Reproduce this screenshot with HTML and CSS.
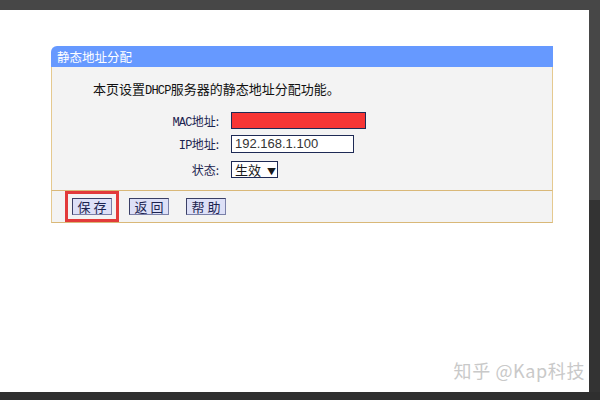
FILE: index.html
```html
<!DOCTYPE html>
<html lang="zh-CN">
<head>
  <meta charset="UTF-8" />
  <title>静态地址分配</title>
  <link rel="stylesheet" href="styles.css">
</head>
<body>
  <div class="top"></div>
  <div class="middle">
    <div class="page">
      <div class="panel">
        <div class="panel-head">静态地址分配</div>
        <div class="panel-body">
          <p class="desc">本页设置<span class="lat">DHCP</span>服务器的静态地址分配功能。</p>
          <div class="row">
            <span class="label"><span class="lat">MAC</span>地址:</span>
            <span class="field mac"></span>
          </div>
          <div class="row">
            <span class="label"><span class="lat">IP</span>地址:</span>
            <span class="field ip">192.168.1.100</span>
          </div>
          <div class="row status">
            <span class="label">状态:</span>
            <span class="field select">生效 <span class="arrow">▼</span></span>
          </div>
        </div>
        <div class="panel-foot">
          <span class="mark"><button class="btn">保存</button></span>
          <button class="btn">返回</button>
          <button class="btn">帮助</button>
        </div>
      </div>
      <div class="watermark">知乎 @Kap科技</div>
    </div>
    <div class="side"></div>
  </div>
  <div class="bottom"></div>
</body>
</html>
```

FILE: styles.css
```css
body {
  margin: 0;
  width: 600px;
  height: 400px;
  overflow: hidden;
  background: #444;
  font-family: "Noto Sans CJK SC", sans-serif;
  font-size: 13px;
  color: #1a1a1a;
  display: flex;
  flex-direction: column;
}
.top {
  height: 10px;
  background: #474747;
}
.middle {
  height: 382px;
  display: flex;
}
.page {
  flex: 1;
  background: #fff;
  padding: 36px 0 0 51px;
  position: relative;
}
.side {
  width: 11px;
  background: linear-gradient(#474747 0, #474747 190px, #333 190px);
}
.bottom {
  flex: 1;
  background: #2f2f2f;
}
.panel {
  width: 502px;
}
.panel-head {
  height: 21px;
  line-height: 21px;
  background: #6699ff;
  color: #fff;
  font-size: 12.5px;
  padding-left: 6px;
  border-radius: 6px 0 0 0;
}
.panel-body {
  background: #f3f3f3;
  border-left: 1px solid #e5c98f;
  border-right: 1px solid #e5c98f;
  border-bottom: 1px solid #d9b878;
  height: 123px;
  display: flex;
  flex-direction: column;
}
.lat {
  font-family: "Liberation Mono", monospace;
  font-size: 12px;
  letter-spacing: -0.8px;
}
.desc {
  margin: 14px 0 0;
  padding-left: 41px;
  height: 16px;
  line-height: 16px;
  color: #111;
}
.row {
  display: flex;
  align-items: center;
  height: 17px;
  margin-top: 6px;
}
.desc + .row {
  margin-top: 15px;
}
.row.status {
  margin-top: 9px;
}
.label {
  width: 167px;
  height: 17px;
  line-height: 17px;
  text-align: right;
  font-size: 12px;
  color: #1c2450;
}
.field {
  margin-left: 12px;
  height: 15px;
  border: 1px solid #1e2a55;
  background: #fff;
  line-height: 15px;
}
.mac {
  width: 133px;
  background: #f73535;
}
.ip {
  height: 16px;
  line-height: 16px;
  font-family: "Liberation Sans", sans-serif;
  font-size: 13px;
  color: #333;
  padding-left: 3px;
  width: 118px;
}
.select {
  width: 42px;
  padding-left: 3px;
  font-size: 13px;
}
.arrow {
  font-size: 9px;
  margin-left: 3px;
}
.panel-foot {
  height: 32px;
  box-sizing: border-box;
  background: #f3f3f3;
  border-left: 1px solid #e5c98f;
  border-right: 1px solid #e5c98f;
  border-bottom: 1px solid #d9b878;
  display: flex;
  align-items: flex-start;
  gap: 17px;
  padding: 7px 0 0 20px;
}
.mark {
  outline: 3px solid #e23a3a;
  outline-offset: 4px;
  display: flex;
}
.btn {
  width: 40px;
  height: 17px;
  padding: 0;
  margin: 0;
  border: 1px solid #3a3f66;
  border-right-color: #7a80a8;
  border-bottom-color: #7a80a8;
  background: #dde0f7;
  font-family: "Noto Sans CJK SC", sans-serif;
  font-size: 13px;
  line-height: 15px;
  letter-spacing: 3px;
  text-indent: 3px;
  color: #1c2450;
}
.watermark {
  position: absolute;
  right: 4px;
  bottom: 9px;
  font-size: 18px;
  letter-spacing: 0.6px;
  color: #c9c9c9;
  font-family: "Noto Sans CJK SC", sans-serif;
}
```
